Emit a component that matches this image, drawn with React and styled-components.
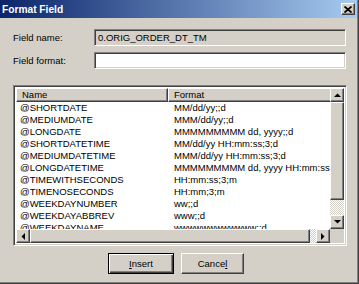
import React from "react";
import styled, { createGlobalStyle } from "styled-components";

const formats = [
  ["@SHORTDATE", "MM/dd/yy;;d"],
  ["@MEDIUMDATE", "MMM/dd/yy;;d"],
  ["@LONGDATE", "MMMMMMMMM dd, yyyy;;d"],
  ["@SHORTDATETIME", "MM/dd/yy HH:mm:ss;3;d"],
  ["@MEDIUMDATETIME", "MMM/dd/yy HH:mm:ss;3;d"],
  ["@LONGDATETIME", "MMMMMMMMM dd, yyyy HH:mm:ss;3;d"],
  ["@TIMEWITHSECONDS", "HH:mm:ss;3;m"],
  ["@TIMENOSECONDS", "HH:mm;3;m"],
  ["@WEEKDAYNUMBER", "ww;;d"],
  ["@WEEKDAYABBREV", "www;;d"],
  ["@WEEKDAYNAME", "wwwwwwwwwwww;;d"],
];

const Arrow = ({ dir }) => {
  const pts = {
    up: "0,4 7,4 3.5,0.5",
    down: "0,0 7,0 3.5,3.5",
    left: "4,0 4,7 0.5,3.5",
    right: "0,0 0,7 3.5,3.5",
  }[dir];
  const vertical = dir === "up" || dir === "down";
  return (
    <svg width={vertical ? 7 : 4} height={vertical ? 4 : 7} viewBox={vertical ? "0 0 7 4" : "0 0 4 7"}>
      <polygon points={pts} fill="#000" />
    </svg>
  );
};

const App = () => {
  return (
    <>
      <GlobalStyle />
      <Window>
        <TitleBar>
          <TitleText>Format Field</TitleText>
          <CloseButton>
            <svg width="8" height="7" viewBox="0 0 8 7">
              <path d="M0.5 0.5 L7.5 6.5 M7.5 0.5 L0.5 6.5" stroke="#000" strokeWidth="1.8" />
            </svg>
          </CloseButton>
        </TitleBar>
        <Body>
          <FieldRow>
            <Label>Field name:</Label>
            <TextBox $readonly>0.ORIG_ORDER_DT_TM</TextBox>
          </FieldRow>
          <FieldRow>
            <Label>Field format:</Label>
            <TextBox />
          </FieldRow>
          <ListView>
            <ListArea>
              <HeaderRow>
                <HeaderCell $w={152}>Name</HeaderCell>
                <HeaderCell $w={200}>Format</HeaderCell>
              </HeaderRow>
              {formats.map(([name, fmt]) => (
                <ItemRow key={name}>
                  <NameCell>{name}</NameCell>
                  <FormatCell>{fmt}</FormatCell>
                </ItemRow>
              ))}
            </ListArea>
            <VScroll>
              <ScrollButton><Arrow dir="up" /></ScrollButton>
              <VTrack>
                <VThumb />
              </VTrack>
              <ScrollButton><Arrow dir="down" /></ScrollButton>
            </VScroll>
            <HScroll>
              <ScrollButton><Arrow dir="left" /></ScrollButton>
              <HTrack>
                <HThumb />
              </HTrack>
              <ScrollButton><Arrow dir="right" /></ScrollButton>
            </HScroll>
            <Corner />
          </ListView>
          <ButtonRow>
            <PushButton $default>
              <u>I</u>nsert
            </PushButton>
            <PushButton>
              Cance<u>l</u>
            </PushButton>
          </ButtonRow>
        </Body>
      </Window>
    </>
  );
};

export default App;

const GlobalStyle = createGlobalStyle`
  html, body {
    margin: 0;
    padding: 0;
    background: #d4d0c8;
    overflow: hidden;
  }
  body {
    font-family: "Liberation Sans", Arial, sans-serif;
    font-size: 9.5px;
    color: #000;
  }
`;

const raised = `
  border-top: 1px solid #fff;
  border-left: 1px solid #fff;
  border-right: 1px solid #404040;
  border-bottom: 1px solid #404040;
  box-shadow: inset -1px -1px 0 #808080;
`;

const sunken = `
  border-top: 1px solid #808080;
  border-left: 1px solid #808080;
  border-right: 1px solid #fff;
  border-bottom: 1px solid #fff;
  box-shadow: inset 1px 1px 0 #404040, inset -1px -1px 0 #d4d0c8;
`;

const Window = styled.div`
  width: 359px;
  height: 284px;
  box-sizing: border-box;
  background: #d4d0c8;
  display: flex;
  flex-direction: column;
  border-right: 1px solid #404040;
  border-bottom: 1px solid #404040;
  box-shadow: inset -1px -1px 0 #808080;
  padding-right: 1px;
`;

const TitleBar = styled.div`
  height: 18px;
  flex-shrink: 0;
  display: flex;
  align-items: center;
  justify-content: space-between;
  padding: 0 2px 0 2px;
  background: linear-gradient(to right, #0a246a, #a6caf0);
`;

const TitleText = styled.div`
  color: #fff;
  font-weight: bold;
  font-size: 10.2px;
`;

const CloseButton = styled.div`
  width: 14px;
  height: 12px;
  box-sizing: border-box;
  background: #d4d0c8;
  display: flex;
  align-items: center;
  justify-content: center;
  ${raised}
`;

const Body = styled.div`
  flex: 1;
  display: flex;
  flex-direction: column;
  padding: 11px 10px 0 13px;
`;

const FieldRow = styled.div`
  display: flex;
  align-items: center;
  height: 17px;
  margin-bottom: 6px;
`;

const Label = styled.div`
  width: 81px;
`;

const TextBox = styled.div`
  width: 252px;
  height: 17px;
  box-sizing: border-box;
  background: ${(p) => (p.$readonly ? "#d4d0c8" : "#fff")};
  padding: 2px 3px;
  line-height: 12px;
  font-size: 9.5px;
  ${sunken}
`;

const ListView = styled.div`
  margin-top: 10px;
  width: 334px;
  height: 161px;
  box-sizing: border-box;
  background: #fff;
  display: grid;
  grid-template-columns: 1fr 14px;
  grid-template-rows: 1fr 14px;
  padding: 2px;
  ${sunken}
`;

const ListArea = styled.div`
  overflow: hidden;
  white-space: nowrap;
`;

const HeaderRow = styled.div`
  display: flex;
  height: 14px;
  background: #d4d0c8;
`;

const HeaderCell = styled.div`
  width: ${(p) => p.$w}px;
  flex-shrink: 0;
  box-sizing: border-box;
  padding-left: 5px;
  line-height: 12px;
  ${raised}
`;

const ItemRow = styled.div`
  display: flex;
  height: 12px;
  line-height: 12px;
  &:first-of-type {
    margin-top: 0;
  }
`;

const NameCell = styled.div`
  width: 152px;
  flex-shrink: 0;
  padding-left: 4px;
  box-sizing: border-box;
`;

const FormatCell = styled.div`
  padding-left: 6px;
`;

const ScrollButton = styled.div`
  width: 14px;
  height: 14px;
  flex-shrink: 0;
  box-sizing: border-box;
  background: #d4d0c8;
  display: flex;
  align-items: center;
  justify-content: center;
  ${raised}
`;

const track = `
  background-color: #ebe9e5;
  background-image: repeating-conic-gradient(#fff 0 25%, #d4d0c8 0 50%);
  background-size: 2px 2px;
`;

const VScroll = styled.div`
  display: flex;
  flex-direction: column;
`;

const VTrack = styled.div`
  flex: 1;
  ${track}
`;

const VThumb = styled.div`
  height: 98px;
  box-sizing: border-box;
  background: #d4d0c8;
  ${raised}
`;

const HScroll = styled.div`
  display: flex;
`;

const HTrack = styled.div`
  flex: 1;
  ${track}
`;

const HThumb = styled.div`
  width: 280px;
  height: 14px;
  box-sizing: border-box;
  background: #d4d0c8;
  ${raised}
`;

const Corner = styled.div`
  background: #d4d0c8;
`;

const ButtonRow = styled.div`
  display: flex;
  gap: 7px;
  padding-left: 95px;
  margin-top: 7px;
`;

const PushButton = styled.div`
  width: ${(p) => (p.$default ? 66 : 63)}px;
  height: 21px;
  box-sizing: border-box;
  background: #d4d0c8;
  display: flex;
  align-items: center;
  justify-content: center;
  ${(p) =>
    p.$default
      ? `
    border: 1px solid #000;
    box-shadow: inset 1px 1px 0 #fff, inset -1px -1px 0 #404040, inset -2px -2px 0 #808080;
  `
      : raised}
`;
